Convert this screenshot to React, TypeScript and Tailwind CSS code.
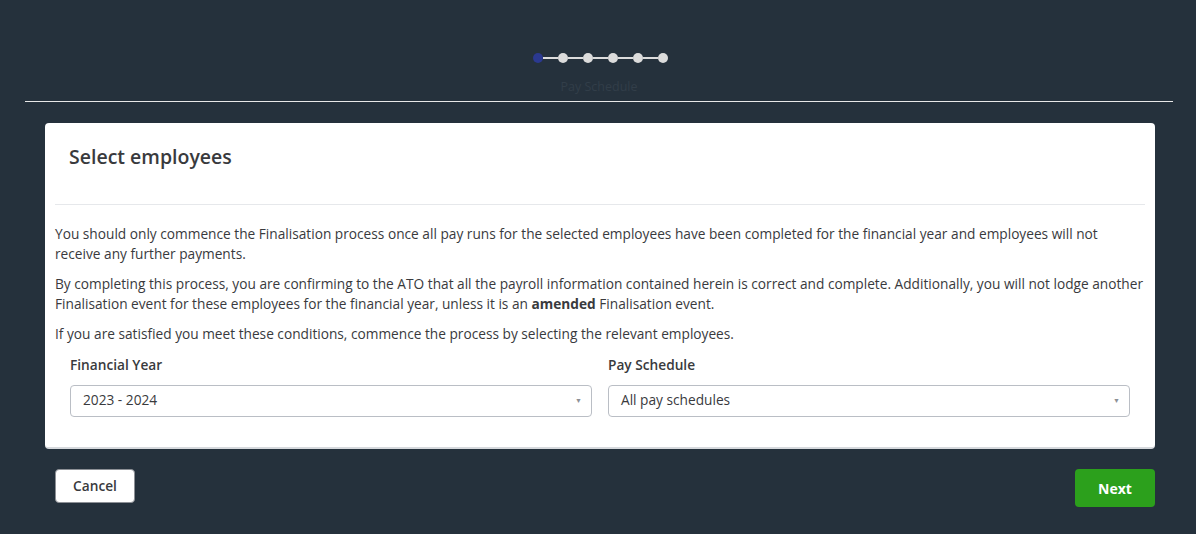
export default function App() {
  const steps = [0, 1, 2, 3, 4, 5]
  return (
    <div className="min-h-screen w-full bg-[#25313c] font-['Open_Sans',sans-serif] text-[#393a3d] pb-10">
      {/* Stepper */}
      <div className="pt-[53px] flex flex-col items-center">
        <div className="flex items-center ml-[4px]">
          {steps.map((s, i) => (
            <div key={s} className="flex items-center">
              {i > 0 && <div className="w-[15px] h-[2px] bg-[#dcdcdc]" />}
              <div className={`w-[10px] h-[10px] rounded-full ${i === 0 ? 'bg-[#2b3990]' : 'bg-[#dcdcdc]'}`} />
            </div>
          ))}
        </div>
        <div className="mt-[16px] ml-[2px] text-[12.5px] leading-[16px] text-[#323e49]">Pay Schedule</div>
      </div>
      <div className="ml-[25px] mr-[23px] mt-[6px] h-px bg-[#e8e8e8]" />

      {/* Card */}
      <div className="ml-[45px] mr-[41px] mt-[21px] bg-white rounded-[4px] border-b-2 border-[#d6d9dd]">
        <div className="h-[81px] px-[24px] flex items-center pb-[14px]">
          <h1 className="text-[19.5px] font-semibold text-[#393a3d]">Select employees</h1>
        </div>
        <div className="mx-[10px] h-px bg-[#e6e8eb]" />
        <div className="pl-[10px] pr-[8px] pt-[19px] text-[13.7px] leading-[20px] space-y-[10px]">
          <p>
            You should only commence the Finalisation process once all pay runs for the selected employees have been completed for the financial year and employees will not
            <br />
            receive any further payments.
          </p>
          <p>
            By completing this process, you are confirming to the ATO that all the payroll information contained herein is correct and complete. Additionally, you will not lodge another Finalisation event for these employees for the financial year, unless it is an <b className="font-bold">amended</b> Finalisation event.
          </p>
          <p>If you are satisfied you meet these conditions, commence the process by selecting the relevant employees.</p>
        </div>
        <div className="px-[25px] pt-[11px] pb-[30px] grid grid-cols-2 gap-x-[16px]">
          {[
            ['Financial Year', '2023 - 2024'],
            ['Pay Schedule', 'All pay schedules'],
          ].map(([label, value]) => (
            <div key={label}>
              <div className="text-[13.7px] leading-[20px] font-semibold text-[#393a3d]">{label}</div>
              <div className="mt-[10px] h-[32px] border border-[#babec5] rounded-[4px] flex items-center justify-between pl-[12px] pr-[9px] text-[13.7px] pb-[2px]">
                <span>{value}</span>
                <span className="text-[7px] text-[#8d9096] pt-[2px]">▼</span>
              </div>
            </div>
          ))}
        </div>
      </div>

      {/* Footer */}
      <div className="pl-[55px] pr-[41px] mt-[20px] flex justify-between items-start">
        <button className="w-[80px] h-[34px] bg-white border border-[#8d9096] rounded-[4px] text-[13.7px] font-semibold text-[#393a3d]">
          Cancel
        </button>
        <button className="w-[80px] h-[38px] bg-[#2ca01c] rounded-[4px] text-[14px] font-bold text-white">
          Next
        </button>
      </div>
    </div>
  )
}
